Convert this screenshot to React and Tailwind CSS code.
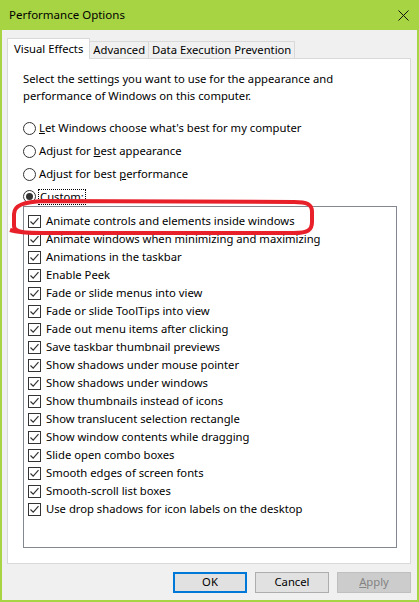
import React from "react"

const items = [
  "Animate controls and elements inside windows",
  "Animate windows when minimizing and maximizing",
  "Animations in the taskbar",
  "Enable Peek",
  "Fade or slide menus into view",
  "Fade or slide ToolTips into view",
  "Fade out menu items after clicking",
  "Save taskbar thumbnail previews",
  "Show shadows under mouse pointer",
  "Show shadows under windows",
  "Show thumbnails instead of icons",
  "Show translucent selection rectangle",
  "Show window contents while dragging",
  "Slide open combo boxes",
  "Smooth edges of screen fonts",
  "Smooth-scroll list boxes",
  "Use drop shadows for icon labels on the desktop",
]

const Radio = ({ checked, children }) => (
  <div className="flex items-center h-[23px]">
    <span className="w-[13px] h-[13px] rounded-full border border-[#333] bg-white flex items-center justify-center">
      {checked && <span className="w-[7px] h-[7px] rounded-full bg-[#333]" />}
    </span>
    <span className="ml-[3px]">{children}</span>
  </div>
)

const Check = () => (
  <span className="w-[13px] h-[13px] border border-[#333] bg-white flex items-center justify-center shrink-0">
    <svg width="11" height="11" viewBox="0 0 11 11">
      <path d="M1.5 5.5 L4.2 8.2 L9.5 2.2" fill="none" stroke="#333" strokeWidth="1.2" />
    </svg>
  </span>
)

export default function App() {
  return (
    <div
      className="w-[419px] h-[602px] flex flex-col bg-[#f0f0f0] border-x-2 border-b-2 border-[#a6d443] text-[11.25px] text-black relative"
      style={{ fontFamily: '"Noto Sans", sans-serif' }}
    >
      {/* title bar */}
      <div className="h-[30px] -mx-[2px] bg-[#a6d443] flex items-center justify-between pl-[9px] pr-[10px]">
        <span className="text-[11.5px]">Performance Options</span>
        <svg width="11" height="11" viewBox="0 0 11 11">
          <path d="M0.5 0.5 L10.5 10.5 M10.5 0.5 L0.5 10.5" stroke="#111" strokeWidth="1" />
        </svg>
      </div>

      <div className="pl-[5px] pr-[6px] pt-[8px] flex flex-col">
        {/* tabs */}
        <div className="flex items-end">
          <div className="h-[21px] -mb-px z-10 px-[6px] bg-white border border-b-0 border-[#d9d9d9] flex items-center">
            Visual Effects
          </div>
          <div className="h-[17px] px-[3px] bg-[#f0f0f0] border border-l-0 border-b-0 border-[#d9d9d9] flex items-center">
            Advanced
          </div>
          <div className="h-[17px] px-[3px] bg-[#f0f0f0] border border-l-0 border-b-0 border-[#d9d9d9] flex items-center">
            Data Execution Prevention
          </div>
        </div>

        {/* panel */}
        <div className="h-[506px] bg-white border border-[#d9d9d9] pl-[15px] pr-[13px] pt-[11px] flex flex-col">
          <p className="leading-[17px]">
            Select the settings you want to use for the appearance and
            <br />
            performance of Windows on this computer.
          </p>
          <div className="mt-[13px] flex flex-col">
            <Radio>
              <u>L</u>et Windows choose what's best for my computer
            </Radio>
            <Radio>
              Adjust for <u>b</u>est appearance
            </Radio>
            <Radio>
              Adjust for best <u>p</u>erformance
            </Radio>
            <div className="flex items-center h-[21px]">
              <span className="w-[13px] h-[13px] rounded-full border border-[#333] bg-white flex items-center justify-center">
                <span className="w-[7px] h-[7px] rounded-full bg-[#333]" />
              </span>
              <span className="ml-[2px] px-px border border-dotted border-black leading-[14px]">
                <u>C</u>ustom:
              </span>
            </div>
          </div>

          <div className="mt-[-1px] h-[342px] bg-white border border-[#828790] pt-[5px] pl-[4px]">
            {items.map((t) => (
              <div key={t} className="flex items-center h-[18px] gap-[5px]">
                <Check />
                <span>{t}</span>
              </div>
            ))}
          </div>
        </div>

        {/* buttons */}
        <div className="mt-[8px] flex justify-end gap-[8px]">
          <button className="w-[74px] h-[21px] bg-[#e1e1e1] border-2 border-[#0078d7] flex items-center justify-center">
            OK
          </button>
          <button className="w-[74px] h-[21px] bg-[#e1e1e1] border border-[#adadad] flex items-center justify-center">
            Cancel
          </button>
          <button className="w-[74px] h-[21px] bg-[#cccccc] border border-[#bfbfbf] text-[#838383] flex items-center justify-center">
            <span>
              <u>A</u>pply
            </span>
          </button>
        </div>
      </div>

      {/* red annotation */}
      <svg className="absolute left-0 top-0 pointer-events-none" width="419" height="602">
        <path
          d="M42 201 C22 202 12 205 12 214 L12 226 C12 231 18 233 40 233 L292 233 C306 233 310 230 310 222 L310 212 C310 204 305 202 292 202 L40 201 M8 230 C14 232 24 233 40 233"
          fill="none"
          stroke="#e8202a"
          strokeWidth="4"
        />
      </svg>
    </div>
  )
}
